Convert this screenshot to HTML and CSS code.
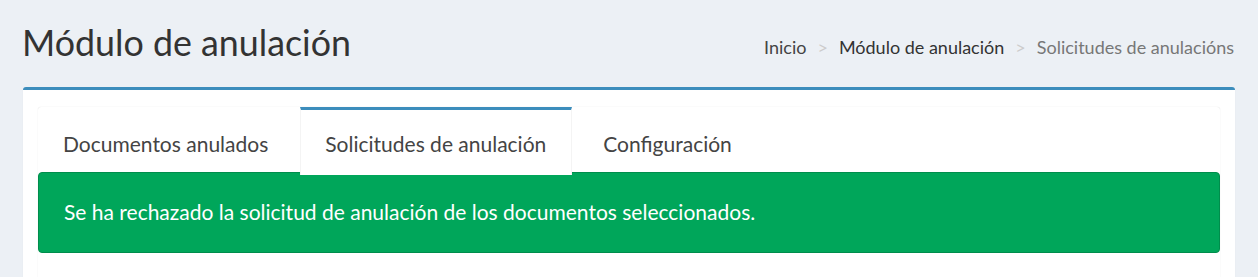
FILE: index.html
```html
<!DOCTYPE html>
<html lang="es">
<head>
<meta charset="utf-8">
<title>Módulo de anulación</title>
<link rel="stylesheet" href="styles.css">
</head>
<body>
<div class="page">
  <header class="content-header">
    <h1 class="title">Módulo de anulación</h1>
    <ol class="breadcrumb">
      <li class="crumb">Inicio</li>
      <li class="crumb crumb-mid">Módulo de anulación</li>
      <li class="crumb crumb-active">Solicitudes de anulacións</li>
    </ol>
  </header>
  <section class="content">
    <div class="box">
      <div class="nav-tabs-custom">
        <ul class="nav-tabs">
          <li class="tab"><a class="tab-link">Documentos anulados</a></li>
          <li class="tab tab-active"><a class="tab-link">Solicitudes de anulación</a></li>
          <li class="tab"><a class="tab-link">Configuración</a></li>
        </ul>
        <div class="tab-content">
          <div class="alert-success">Se ha rechazado la solicitud de anulación de los documentos seleccionados.</div>
        </div>
      </div>
    </div>
  </section>
</div>
</body>
</html>
```

FILE: styles.css
```css
* { box-sizing: border-box; }
html, body {
  margin: 0;
  padding: 0;
  background: #ecf0f5;
  font-family: "Lato", "Liberation Sans", sans-serif;
  color: #333;
  overflow: hidden;
}
.page {
  width: 1258px;
  height: 277px;
  overflow: hidden;
}
.content-header {
  display: flex;
  justify-content: space-between;
  align-items: flex-start;
  padding: 21px 24px 22px 22px;
}
.title {
  margin: 0;
  font-size: 35.8px;
  line-height: 44px;
  font-weight: 400;
  color: #333;
}
.breadcrumb {
  display: flex;
  list-style: none;
  margin: 14px 0 0 0;
  padding: 0;
  font-size: 18px;
  line-height: 24px;
}
.crumb { color: #444; }
.crumb + .crumb::before {
  content: ">";
  color: #ccc;
  margin: 0 11px;
}
.crumb-mid { color: #333; }
.crumb-active { color: #777; }
.content {
  padding: 0 23px 0 23px;
}
.box {
  background: #fff;
  border-top: 3px solid #3c8dbc;
  border-radius: 3px;
  padding: 17px 15px 0 15px;
  height: 200px;
  box-shadow: 0 1px 1px rgba(0,0,0,0.1);
}
.nav-tabs-custom {
  background: #fff;
  border-radius: 3px;
  box-shadow: 0 0 1px rgba(0,0,0,0.18);
  height: 200px;
}
.nav-tabs {
  display: flex;
  list-style: none;
  margin: 0 0 -3px 0;
  padding: 0;
}
.tab {
  margin-right: 6px;
  border-top: 3px solid transparent;
  border-left: 1px solid transparent;
  border-right: 1px solid transparent;
}
.tab-active {
  position: relative;
  z-index: 1;
  background: #fff;
  border-top-color: #3c8dbc;
  border-left-color: #f4f4f4;
  border-right-color: #f4f4f4;
}
.tab-link {
  display: block;
  padding: 21px 25px 18px 24px;
  font-size: 21px;
  line-height: 26px;
  color: #444;
}
.tab-content {
  padding: 0;
}
.alert-success {
  background: #00a65a;
  border: 1px solid #008d4c;
  border-radius: 4px;
  color: #fff;
  font-size: 21px;
  line-height: 26px;
  padding: 26px 25px 27px 25px;
}
```
